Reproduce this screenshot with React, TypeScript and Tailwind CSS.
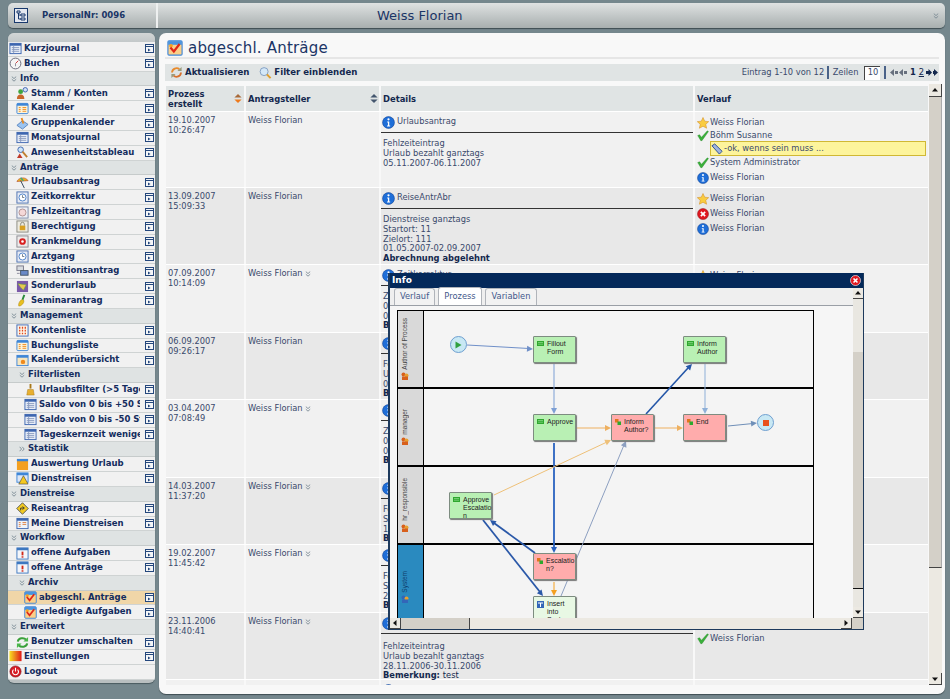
import type { ReactNode } from "react"

type IconName =
  | "table" | "dial" | "user" | "cal" | "group" | "finder" | "umbrella" | "clock" | "sick" | "lock" | "red"
  | "invest" | "special" | "bottle" | "grid" | "sun" | "broom" | "bar" | "warn" | "road" | "tasks" | "todo"
  | "done" | "swap" | "heat" | "power"

function Ico({ name, size = 13 }: { name: IconName; size?: number }) {
  const shapes: Record<IconName, ReactNode> = {
    table: <><rect x="1" y="1.5" width="12" height="11" fill="#e8eef8" stroke="#3d66b0" /><rect x="1" y="1.5" width="12" height="2.5" fill="#3d66b0" /><path d="M3 6h8M3 8h8M3 10h8M5 4v8" stroke="#8a9cc0" /></>,
    dial: <><circle cx="7" cy="7" r="5.8" fill="#f4f4f4" stroke="#667" /><path d="M7 7l3-3" stroke="#c33" /><path d="M7 7v3" stroke="#889" /></>,
    user: <><circle cx="5" cy="5" r="2.6" fill="#3fa63f" /><path d="M1 13c0-4 2-5 4-5s4 1 4 5z" fill="#c8662a" /><circle cx="10" cy="3" r="2.4" fill="#cfe0f8" stroke="#3d66b0" /></>,
    cal: <><rect x="1" y="1.5" width="12" height="11" rx="1" fill="#fdf3d8" stroke="#3d86d8" /><rect x="1" y="1.5" width="12" height="2.5" fill="#3d86d8" /><path d="M3 6h2M7 6h4M3 8h2M7 8h4M3 10h2M7 10h4" stroke="#f08a1c" /></>,
    group: <><path d="M1 9l6-5 6 4-6 5z" fill="#9cc4f0" stroke="#5a86c0" /><path d="M6 1l2 6" stroke="#e88a20" strokeWidth="2" /></>,
    finder: <><circle cx="5" cy="4" r="3" fill="#cfe6f8" stroke="#3d66b0" /><path d="M7 6l5 6" stroke="#c08030" strokeWidth="2" /><path d="M1 13l3-5 3 5z" fill="#c03a2a" /></>,
    umbrella: <><path d="M1 6c1-4 9-6 12-1z" fill="#e8b020" stroke="#b04020" strokeWidth=".6" /><path d="M5 5l4 8" stroke="#345" /><path d="M5 2l3 3" stroke="#3a8" strokeWidth="1.5" /></>,
    clock: <><rect x="1" y="1" width="12" height="12" fill="#e6eaf4" stroke="#4a70b0" /><circle cx="7" cy="7" r="3.8" fill="#fff" stroke="#4a80c8" /><path d="M7 7V4.5M7 7h2" stroke="#345" strokeWidth=".7" /></>,
    sick: <><rect x="1" y="1" width="12" height="12" fill="#eef0f6" stroke="#7a8aa8" /><circle cx="7" cy="7" r="3.8" fill="#f4d8d8" stroke="#b09090" /></>,
    lock: <><rect x="1" y="1" width="12" height="12" fill="#eceae0" stroke="#8a8a80" /><rect x="4" y="6" width="6" height="5" fill="#d8a020" /><path d="M5 6V4.5a2 2 0 014 0V6" fill="none" stroke="#887" /></>,
    red: <><rect x="1" y="1" width="12" height="12" fill="#eceaea" stroke="#8a8a90" /><circle cx="7" cy="7" r="3.6" fill="#d82020" /><circle cx="7" cy="7" r="1.4" fill="#fff" /></>,
    invest: <><rect x="1" y="1" width="7" height="5" fill="#d8dce0" stroke="#778" /><rect x="5" y="6" width="8" height="5" fill="#6a8ac8" stroke="#456" /><path d="M1 9h3" stroke="#889" /></>,
    special: <><rect x="1" y="1" width="12" height="12" fill="#7a5aa8" /><path d="M2 4l9 1-3 6-3-3z" fill="#e8c850" stroke="#5a3" strokeWidth=".5" /></>,
    bottle: <><path d="M3 13c-1-3 2-7 4-7s2 3 0 5-3 2-4 2z" fill="#e8c020" stroke="#a88010" strokeWidth=".5" /><path d="M7 6l2-5" stroke="#2a8a3a" strokeWidth="2" /></>,
    grid: <><rect x="1" y="1" width="12" height="12" fill="#fdf6ea" stroke="#3d6ab8" /><path d="M4 3v8M7 3v8M10 3v8" stroke="#e0481c" strokeWidth="1.4" strokeDasharray="2 1.2" /></>,
    sun: <><rect x="1" y="1.5" width="12" height="11" fill="#f6e6c0" stroke="#3d86d8" /><rect x="1" y="1.5" width="12" height="2.5" fill="#3d86d8" /><circle cx="7.5" cy="8.5" r="2.4" fill="#f08a1c" /></>,
    broom: <><path d="M7 1v5" stroke="#a87818" strokeWidth="2" /><path d="M3 13l1-6h6l1 6z" fill="#e8b030" stroke="#a87818" strokeWidth=".5" /></>,
    bar: <><rect x="1" y="1" width="12" height="12" fill="#f4a020" /><rect x="1" y="1" width="12" height="2.5" fill="#3d86d8" /></>,
    warn: <><rect x="1" y="1" width="12" height="10" fill="#dbe6f6" stroke="#3d86d8" /><rect x="1" y="1" width="12" height="2.5" fill="#3d86d8" /><path d="M8 4l5 9H3z" fill="#f4c820" stroke="#333" strokeWidth=".6" /></>,
    road: <><path d="M7 .8L13.2 7 7 13.2.8 7z" fill="#f2ca20" stroke="#555" /><path d="M5 9V6.5h3M7 5l2 1.5L7 8" fill="none" stroke="#333" /></>,
    tasks: <><rect x="1" y="1.5" width="12" height="11" fill="#f0f4fa" stroke="#3d66b0" /><rect x="1" y="1.5" width="12" height="2.5" fill="#3d66b0" /><path d="M3 6h2M3 8h2M3 10h2M7 6h4M7 8h4" stroke="#e08040" /></>,
    todo: <><rect x="1" y="1" width="12" height="12" fill="#f4f6fa" stroke="#3d78c0" /><rect x="1" y="1" width="12" height="2.5" fill="#3d78c0" /><rect x="6" y="5" width="2" height="4" fill="#d02818" /><rect x="6" y="10" width="2" height="1.5" fill="#d02818" /></>,
    done: <><rect x=".8" y=".8" width="12.4" height="12.4" rx="1" fill="#fbcf88" stroke="#3d86d8" /><rect x="1" y="1" width="12" height="3.2" fill="#4a94e0" /><circle cx="3.500" cy="5" r="1.600" fill="#f6a020" /><path d="M3 6.500l3 3.500 5-6.500" fill="none" stroke="#e02818" strokeWidth="1.900" /></>,
    swap: <><path d="M2 6a5 4 0 019-2" fill="none" stroke="#3aa03a" strokeWidth="2.2" /><path d="M12 8a5 4 0 01-9 2" fill="none" stroke="#3aa03a" strokeWidth="2.2" /><path d="M13 1v5H8zM1 13V8h5z" fill="#4ab84a" /></>,
    heat: <><defs><linearGradient id="heat"><stop offset="0" stopColor="#f8e020" /><stop offset="1" stopColor="#e01818" /></linearGradient></defs><rect x=".5" y="1" width="13" height="11" fill="url(#heat)" /></>,
    power: <><circle cx="7" cy="7" r="6" fill="#d81c24" stroke="#801018" strokeWidth=".7" /><path d="M4.8 5a3.2 3.2 0 104.4 0" fill="none" stroke="#fff" strokeWidth="1.2" /><path d="M7 3v4" stroke="#fff" strokeWidth="1.2" /></>,
  }
  return <svg width={size} height={size} viewBox="0 0 14 14" className="shrink-0">{shapes[name]}</svg>
}

function WindowIcon() {
  return (
    <svg width="9" height="9" viewBox="0 0 9 9" className="shrink-0">
      <rect x=".5" y=".5" width="8" height="8" fill="#f4f6f8" stroke="#24477c" />
      <path d="M1 2.5h7" stroke="#24477c" />
      <path d="M3 4.5l2.5 1.5L3 7.5z" fill="#24477c" />
    </svg>
  )
}

function Chevrons({ right = false }: { right?: boolean }) {
  return (
    <svg width="6" height="6" viewBox="0 0 6 6" className={right ? "-rotate-90 shrink-0" : "shrink-0"}>
      <path d="M.8.6L3 2.6 5.2.6M.8 3.2L3 5.2 5.2 3.2" fill="none" stroke="#7b8a94" strokeWidth=".9" />
    </svg>
  )
}

type MenuRow = { label: string; level: number; icon?: IconName; active?: boolean; noWin?: boolean; right?: boolean }

const menu: MenuRow[] = [
  { label: "Kurzjournal", level: 0, icon: "table" },
  { label: "Buchen", level: 0, icon: "dial" },
  { label: "Info", level: 0 },
  { label: "Stamm / Konten", level: 1, icon: "user" },
  { label: "Kalender", level: 1, icon: "cal" },
  { label: "Gruppenkalender", level: 1, icon: "group" },
  { label: "Monatsjournal", level: 1, icon: "table" },
  { label: "Anwesenheitstableau", level: 1, icon: "finder" },
  { label: "Anträge", level: 0 },
  { label: "Urlaubsantrag", level: 1, icon: "umbrella" },
  { label: "Zeitkorrektur", level: 1, icon: "clock" },
  { label: "Fehlzeitantrag", level: 1, icon: "sick" },
  { label: "Berechtigung", level: 1, icon: "lock" },
  { label: "Krankmeldung", level: 1, icon: "red" },
  { label: "Arztgang", level: 1, icon: "clock" },
  { label: "Investitionsantrag", level: 1, icon: "invest" },
  { label: "Sonderurlaub", level: 1, icon: "special" },
  { label: "Seminarantrag", level: 1, icon: "bottle" },
  { label: "Management", level: 0 },
  { label: "Kontenliste", level: 1, icon: "grid" },
  { label: "Buchungsliste", level: 1, icon: "cal" },
  { label: "Kalenderübersicht", level: 1, icon: "sun" },
  { label: "Filterlisten", level: 1 },
  { label: "Urlaubsfilter (>5 Tage)", level: 2, icon: "broom" },
  { label: "Saldo von 0 bis +50 Std", level: 2, icon: "table" },
  { label: "Saldo von 0 bis -50 Std", level: 2, icon: "table" },
  { label: "Tageskernzeit weniger", level: 2, icon: "table" },
  { label: "Statistik", level: 1, right: true },
  { label: "Auswertung Urlaub", level: 1, icon: "bar" },
  { label: "Dienstreisen", level: 1, icon: "warn" },
  { label: "Dienstreise", level: 0 },
  { label: "Reiseantrag", level: 1, icon: "road" },
  { label: "Meine Dienstreisen", level: 1, icon: "tasks" },
  { label: "Workflow", level: 0 },
  { label: "offene Aufgaben", level: 1, icon: "todo" },
  { label: "offene Anträge", level: 1, icon: "todo" },
  { label: "Archiv", level: 1 },
  { label: "abgeschl. Anträge", level: 2, icon: "done", active: true },
  { label: "erledigte Aufgaben", level: 2, icon: "done" },
  { label: "Erweitert", level: 0 },
  { label: "Benutzer umschalten", level: 1, icon: "swap" },
  { label: "Einstellungen", level: 0, icon: "heat" },
  { label: "Logout", level: 0, icon: "power", noWin: true },
]

function SideRow({ row }: { row: MenuRow }) {
  if (!row.icon) {
    return (
      <div className={`flex h-[14.83px] items-center gap-[3px] border-b border-[#c6cbcb] bg-[#dfe3e3] ${row.level === 1 ? "pl-[11px]" : "pl-[3px]"}`}>
        <Chevrons right={row.right} />
        <span className="text-[8.5px] font-bold text-[#142c5e]">{row.label}</span>
      </div>
    )
  }
  const pad = row.level === 0 ? "pl-[1px]" : row.level === 1 ? "pl-[8px]" : "pl-[16px]"
  return (
    <div className={`flex h-[14.83px] items-center border-b border-[#cfd3d3] pr-[1px] ${pad} ${row.active ? "bg-[#f0d6a8]" : "bg-[#f1f1f1]"}`}>
      <Ico name={row.icon} />
      <span className="ml-[2px] min-w-0 flex-1 overflow-hidden whitespace-nowrap text-[8.5px] font-bold text-[#142c5e]">{row.label}</span>
      {!row.noWin && <span className="ml-[5px]"><WindowIcon /></span>}
    </div>
  )
}

function Sidebar() {
  return (
    <aside className="flex h-[650px] w-[147px] shrink-0 flex-col overflow-hidden rounded-[6px] bg-[#b9bfc0] shadow-[0_1px_1px_#4b5b60]">
      <div className="h-[9px] shrink-0 bg-gradient-to-b from-[#d2d6d6] to-[#c3c8c9]" />
      {menu.map((row) => <SideRow key={row.label} row={row} />)}
    </aside>
  )
}

function InfoIcon({ size = 13 }: { size?: number }) {
  return (
    <svg width={size} height={size} viewBox="0 0 14 14" className="shrink-0">
      <circle cx="7" cy="7" r="6.4" fill="#1e6ed8" stroke="#0f3f90" strokeWidth=".6" />
      <circle cx="7" cy="3.6" r="1.2" fill="#fff" />
      <path d="M5.6 6h2.2v4.2h1v1H5.4v-1h1V7h-.8z" fill="#fff" />
    </svg>
  )
}

function HistIcon({ type }: { type: string }) {
  if (type === "info") return <InfoIcon size={12} />
  if (type === "star") {
    return (
      <svg width="12" height="12" viewBox="0 0 14 14" className="shrink-0">
        <path d="M7 .6l2 4.3 4.6.5-3.4 3.1 1 4.6L7 10.8l-4.2 2.3 1-4.6L.4 5.4 5 4.9z" fill="#f9cc40" stroke="#d8942a" strokeWidth=".7" />
      </svg>
    )
  }
  if (type === "check") {
    return (
      <svg width="12" height="12" viewBox="0 0 14 14" className="shrink-0">
        <path d="M.8 6.500l2.200-1 2.200 3L12 1l1.400.8-7.600 10.600H4.400z" fill="#3ab03a" stroke="#28802a" strokeWidth=".4" />
      </svg>
    )
  }
  return (
    <svg width="12" height="12" viewBox="0 0 14 14" className="shrink-0">
      <circle cx="7" cy="7" r="6.4" fill="#e01820" stroke="#901015" strokeWidth=".6" />
      <path d="M4.5 4.5l5 5M9.5 4.5l-5 5" stroke="#fff" strokeWidth="2" />
    </svg>
  )
}

type Hist = { type: string; name: string; note?: string }
type Row = { height: string; date: string; time: string; arrow?: boolean; title: string; lines: string[]; strong?: ReactNode; hist: Hist[]; textPad?: string }

const rows: Row[] = [
  {
    height: "h-[76px]", date: "19.10.2007", time: "10:26:47", title: "Urlaubsantrag",
    lines: ["Fehlzeiteintrag", "Urlaub bezahlt ganztags", "05.11.2007-06.11.2007"],
    hist: [
      { type: "star", name: "Weiss Florian" },
      { type: "check", name: "Böhm Susanne", note: "-ok, wenns sein muss ..." },
      { type: "check", name: "System Administrator" },
      { type: "info", name: "Weiss Florian" },
    ],
  },
  {
    height: "h-[77px]", date: "13.09.2007", time: "15:09:33", title: "ReiseAntrAbr",
    lines: ["Dienstreise ganztags", "Startort: 11", "Zielort: 111", "01.05.2007-02.09.2007"], strong: "Abrechnung abgelehnt",
    hist: [{ type: "star", name: "Weiss Florian" }, { type: "cross", name: "Weiss Florian" }, { type: "info", name: "Weiss Florian" }],
  },
  { height: "h-[68px]", date: "07.09.2007", time: "10:14:09", arrow: true, title: "Zeitkorrektur", lines: ["Zeitkorrektur", "07.09.2007", "08:00"], strong: "Bemerkung", hist: [{ type: "star", name: "Weiss Florian" }] },
  { height: "h-[67px]", date: "06.09.2007", time: "09:26:17", title: "Urlaubsantrag", lines: ["Fehlzeiteintrag", "Urlaub bezahlt ganztags", "01.10.2007"], strong: "Bemerkung", hist: [{ type: "star", name: "Weiss Florian" }] },
  { height: "h-[78px]", date: "03.04.2007", time: "07:08:49", arrow: true, title: "Zeitkorrektur", lines: ["Zeitkorrektur", "03.04.2007", "07:00"], strong: "Bemerkung", hist: [{ type: "star", name: "Weiss Florian" }] },
  { height: "h-[67px]", date: "14.03.2007", time: "11:37:20", arrow: true, title: "Urlaubsantrag", lines: ["Fehlzeiteintrag", "Sonderurlaub ganztags", "14.03.2007"], strong: "Bemerkung", hist: [{ type: "star", name: "Weiss Florian" }] },
  { height: "h-[68px]", date: "19.02.2007", time: "11:45:42", arrow: true, title: "Urlaubsantrag", lines: ["Fehlzeiteintrag", "Sonderurlaub ganztags", "20.02.2007"], strong: "Bemerkung", hist: [{ type: "star", name: "Weiss Florian" }] },
  {
    height: "h-[67px]", date: "23.11.2006", time: "14:40:41", arrow: true, title: "Urlaubsantrag", textPad: "pt-[8px]",
    lines: ["Fehlzeiteintrag", "Urlaub bezahlt ganztags", "28.11.2006-30.11.2006"],
    strong: <><b>Bemerkung:</b> <span className="font-normal">test</span></>,
    hist: [{ type: "star", name: "Weiss Florian" }, { type: "check", name: "Weiss Florian" }],
  },
  { height: "h-[20px]", date: "", time: "", title: "Urlaubsantrag", lines: [], hist: [] },
]

function SortIcon({ active = false }: { active?: boolean }) {
  return (
    <svg width="8" height="9" viewBox="0 0 8 9" className="shrink-0">
      <path d="M4 0l3.6 3.6H.4z" fill={active ? "#a86a3a" : "#44566e"} />
      <path d="M4 9L.4 5.4h7.2z" fill={active ? "#ee7a1c" : "#44566e"} />
    </svg>
  )
}

function DataRow({ row, dark }: { row: Row; dark: boolean }) {
  const bg = dark ? "bg-[#e8e8e8]" : "bg-[#f1f1f1]"
  return (
    <div className={`flex gap-[2px] border-b border-white ${row.height}`}>
      <div className={`w-[78px] shrink-0 pl-[2px] pt-[4px] ${bg}`}>
        <div>{row.date}</div>
        <div>{row.time}</div>
      </div>
      <div className={`flex w-[133px] shrink-0 items-start gap-[2px] pl-[2px] pt-[4px] ${bg}`}>
        <span>{row.date && "Weiss Florian"}</span>
        {row.arrow && <span className="mt-[2px]"><Chevrons /></span>}
      </div>
      <div className={`w-[312px] shrink-0 ${bg}`}>
        <div className="flex h-[21px] items-center gap-[2px] border-b border-[#333] pl-[1px]">
          <InfoIcon />
          <span>{row.title}</span>
        </div>
        <div className={`pl-[2px] ${row.textPad ?? "pt-[6px]"}`}>
          {row.lines.map((line) => <div key={line}>{line}</div>)}
          {row.strong && <div className="font-bold text-[#14284e]">{row.strong}</div>}
        </div>
      </div>
      <div className={`min-w-0 flex-1 pl-[2px] pt-[3px] ${bg}`}>
        {row.hist.map((h, i) => (
          <div key={i} className={h.note ? "-mt-[2px]" : row.hist[i - 1]?.note ? "-mt-px" : ""}>
            <div className="flex h-[15px] items-center gap-[1px]">
              <HistIcon type={h.type} />
              <span>{h.name}</span>
            </div>
            {h.note && (
              <div className="-mt-[2px] ml-[13px] mr-[2px] flex h-[15px] items-center border border-[#d0b834] bg-[#fdf49c]">
                <svg width="13" height="12" viewBox="0 0 14 13" className="shrink-0">
                  <path d="M1 3l3-2 8 8-3 3z" fill="#9fb4e0" stroke="#2a4a90" />
                </svg>
                <span>{h.note}</span>
              </div>
            )}
          </div>
        ))}
      </div>
    </div>
  )
}

function Triangle({ dir }: { dir: "up" | "down" | "left" | "right" }) {
  const d = { up: "M4 2l3 3.5H1z", down: "M4 6L1 2.5h6z", left: "M2 4l3.5-3v6z", right: "M6 4L2.5 1v6z" }[dir]
  return <svg width="8" height="8" viewBox="0 0 8 8"><path d={d} fill="#111" /></svg>
}

function ScrollBtn({ dir, className }: { dir: "up" | "down" | "left" | "right"; className: string }) {
  return (
    <div className={`flex shrink-0 items-center justify-center border-b border-r border-b-[#444] border-r-[#444] bg-[#ece9e2] ${className}`}>
      <Triangle dir={dir} />
    </div>
  )
}

function Table() {
  return (
    <div className="flex h-[601px] pl-[7px]">
      <div className="w-[762px] shrink-0 overflow-hidden pt-[2px]">
        <div className="flex h-[26px] gap-[2px] border-b border-white text-[8.4px] font-bold leading-[10px] text-[#14284e]">
          <div className="flex w-[78px] shrink-0 items-center justify-between bg-[#e0e4e4] pl-[2px] pr-[2px]">
            <span>Prozess<br />erstellt</span>
            <SortIcon active />
          </div>
          <div className="flex w-[133px] shrink-0 items-center justify-between bg-[#e0e4e4] pl-[2px] pr-[1px]">
            <span>Antragsteller</span>
            <SortIcon />
          </div>
          <div className="flex w-[312px] shrink-0 items-center bg-[#e0e4e4] pl-[2px]">Details</div>
          <div className="flex min-w-0 flex-1 items-center bg-[#e0e4e4] pl-[2px]">Verlauf</div>
        </div>
        {rows.map((row, i) => <DataRow key={i} row={row} dark={i % 2 === 1} />)}
      </div>
      <div className="ml-px flex w-[13px] shrink-0 flex-col bg-[#ece9e2]">
        <ScrollBtn dir="up" className="h-[13px] w-[13px]" />
        <div className="h-[471px] shrink-0 border-b border-r border-b-[#444] border-r-[#aaa] bg-[#d4d0c8]" />
        <div className="flex-1" />
        <ScrollBtn dir="down" className="h-[12px] w-[13px]" />
      </div>
    </div>
  )
}

function Toolbar() {
  return (
    <div className="mx-[6px] flex h-[17px] items-center bg-[#e0e4e4] pl-[5px] pr-[1px]">
      <svg width="13" height="13" viewBox="0 0 14 14" className="shrink-0">
        <path d="M2.2 7a4.8 4.8 0 018-3.4" fill="none" stroke="#e88a2c" strokeWidth="2" />
        <path d="M11.8 7a4.8 4.8 0 01-8 3.4" fill="none" stroke="#d8702c" strokeWidth="2" />
        <path d="M12.5 1v4.5H8zM1.5 13V8.5H6z" fill="#9a9a7a" />
      </svg>
      <span className="ml-[2px] text-[8.6px] font-bold text-[#14284e]">Aktualisieren</span>
      <svg width="13" height="14" viewBox="0 0 14 14" className="ml-[10px] shrink-0">
        <circle cx="5.5" cy="5.5" r="4.3" fill="#d4e8f8" stroke="#7f9cc0" />
        <path d="M8.5 8.5l4 4" stroke="#e0a030" strokeWidth="2.2" />
      </svg>
      <span className="ml-[2px] text-[8.6px] font-bold text-[#14284e]">Filter einblenden</span>
      <span className="ml-auto">Eintrag 1-10 von 12</span>
      <span className="mx-[3px] h-[13px] w-[1.5px] bg-[#4a6288]" />
      <span className="ml-[1px]">Zeilen</span>
      <span className="ml-[6px] flex h-[14px] w-[16px] items-center justify-center border-l border-t border-l-[#444] border-t-[#444] bg-white">10</span>
      <span className="mx-[4px] h-[13px] w-[1.5px] bg-[#4a6288]" />
      <svg width="18" height="7" viewBox="0 0 18 7" className="shrink-0"><path d="M4 0v7L0 3.5zM5 2h3v3H5zM13 0v7L9 3.5zM14 2h3v3h-3z" fill="#67707e" /></svg>
      <span className="ml-[2px] font-bold text-[#14284e]">1</span>
      <span className="ml-[3px] text-[#14284e] underline">2</span>
      <svg width="13" height="7" viewBox="0 0 13 7" className="ml-[1px] shrink-0"><path d="M1 2h2.5V0L7 3.5 3.500 7V5H1zM8 2h1v3H8zM9 0l4 3.500L9 7z" fill="#14284e" /></svg>
    </div>
  )
}

function Node({ pos, color, mark, children }: { pos: string; color: "green" | "red" | "pale"; mark: ReactNode; children: ReactNode }) {
  const bg = { green: "bg-[#b9f0b4]", red: "bg-[#ffacac]", pale: "bg-[#e8f8e4]" }[color]
  return (
    <div className={`absolute flex h-[27px] w-[43px] rounded-[1px] border border-[#7d8c80] pl-[3px] pt-[3px] font-['Liberation_Sans',sans-serif] text-[7px] leading-[8.2px] text-[#222] shadow-[1px_1px_1px_#777] ${pos} ${bg}`}>
      <span className="mr-[3px] mt-[1px] shrink-0">{mark}</span>
      <span>{children}</span>
    </div>
  )
}

const taskMark = <svg width="7" height="5" viewBox="0 0 7 5" className="block"><rect width="7" height="5" fill="#2ea82e" /><path d="M1 1.500h5M1 3.200h5" stroke="#b9f0b4" strokeWidth=".5" /></svg>
const routeMark = <svg width="6" height="6" viewBox="0 0 6 6" className="block"><rect width="3.500" height="3.500" fill="#e0761c" /><rect x="2.500" y="2.500" width="3.500" height="3.500" fill="#2ea82e" /></svg>
const systemMark = <svg width="7" height="7" viewBox="0 0 7 7" className="block"><rect width="7" height="7" fill="#3366b8" /><path d="M1 2h5M3.500 2v4" stroke="#fff" /></svg>

function Edge({ d, to, angle, color, width = 1 }: { d: string; to: [number, number]; angle: number; color: string; width?: number }) {
  const a = (angle * Math.PI) / 180
  const [x, y] = to
  const p = (l: number, off: number) => `${x - l * Math.cos(a) - off * Math.sin(a)},${y - l * Math.sin(a) + off * Math.cos(a)}`
  return (
    <g>
      <path d={d} fill="none" stroke={color} strokeWidth={width} />
      <polygon points={`${x},${y} ${p(6, 3)} ${p(6, -3)}`} fill={color} />
    </g>
  )
}

function Lane({ name, height, blue = false, icon = "#d8601c" }: { name: string; height: string; blue?: boolean; icon?: string }) {
  return (
    <div className={`flex shrink-0 border-b-2 border-black ${height}`}>
      <div className={`flex w-[26px] shrink-0 flex-col items-start justify-center border-r border-black pl-[3px] ${blue ? "bg-[#2a8abf] text-[#10406c]" : "bg-[#d9d9d9] text-[#444]"}`}>
        <span className="rotate-180 font-['Liberation_Sans',sans-serif] text-[6.5px] leading-[8px] [writing-mode:vertical-rl]">{name}</span>
        <svg width="8" height="8" viewBox="0 0 8 8" className="mt-[3px] shrink-0">
          <circle cx="2.500" cy="2.500" r="2" fill={icon} />
          <circle cx="5.500" cy="3.500" r="2" fill="#e8a030" />
          <rect x="1" y="4.500" width="6" height="3.500" fill={icon} />
        </svg>
      </div>
      <div className="flex-1 bg-[#f4f4f4]" />
    </div>
  )
}

function Diagram() {
  return (
    <div className="relative h-[312px] w-[463px] shrink-0 overflow-hidden bg-[#f6f6f6]">
      <div className="ml-[7px] mt-[4px] flex h-[324px] w-[417px] flex-col border-l border-r border-t border-black">
        <Lane name="Author of Process" height="h-[78px]" />
        <Lane name="manager" height="h-[78px]" />
        <Lane name="hr_responsible" height="h-[78px]" />
        <Lane name="System" height="h-[86px]" blue icon="#3366b8" />
      </div>
      <svg width="463" height="312" viewBox="390 306 463 312" className="absolute left-0 top-0">
        <Edge d="M467 345L529 348.500" to={[533, 349]} angle={3} color="#6f8fc8" />
        <Edge d="M554 364V410" to={[554, 414]} angle={90} color="#7d9fd4" />
        <Edge d="M577 428H607" to={[611, 428]} angle={0} color="#eeb060" />
        <Edge d="M655 428H679" to={[683, 428]} angle={0} color="#eeb060" />
        <Edge d="M646 414L688 368" to={[692, 364]} angle={-47} color="#2456a8" width={1.6} />
        <Edge d="M705 364V410" to={[705, 414]} angle={90} color="#8fb0d8" />
        <Edge d="M728 426L753 423.500" to={[757, 423]} angle={-6} color="#6f8fb8" />
        <Edge d="M554 443V549" to={[554, 553]} angle={90} color="#2a62c0" width={1.8} />
        <Edge d="M494 495L607 442" to={[611, 440]} angle={-25} color="#eec078" />
        <Edge d="M535 553L494 523" to={[490, 520]} angle={-143} color="#2a58a8" width={1.8} />
        <Edge d="M483 520L540 592" to={[543, 596]} angle={51} color="#2a58a8" width={1.8} />
        <Edge d="M554 582V592" to={[554, 596]} angle={90} color="#f4a020" />
        <Edge d="M561 596L624 445" to={[626, 441]} angle={-67} color="#8c9fc0" />
      </svg>
      <div className="absolute left-[60px] top-[30px] flex h-[17px] w-[17px] items-center justify-center rounded-full border border-[#6f9fd0] bg-[#c8e8f4]">
        <svg width="7" height="8" viewBox="0 0 7 8"><path d="M.5.500L6.500 4 .5 7.500z" fill="#30a040" /></svg>
      </div>
      <div className="absolute left-[367px] top-[108px] flex h-[17px] w-[17px] items-center justify-center rounded-full border border-[#6f9fd0] bg-[#c8e8f4]">
        <span className="h-[6px] w-[6px] bg-[#e8501c]" />
      </div>
      <Node pos="left-[143px] top-[30px]" color="green" mark={taskMark}>Fillout<br />Form</Node>
      <Node pos="left-[143px] top-[108px]" color="green" mark={taskMark}>Approve</Node>
      <Node pos="left-[221px] top-[108px]" color="red" mark={routeMark}>Inform<br />Author?</Node>
      <Node pos="left-[293px] top-[30px]" color="green" mark={taskMark}>Inform<br />Author</Node>
      <Node pos="left-[293px] top-[108px]" color="red" mark={routeMark}>End</Node>
      <Node pos="left-[59px] top-[186px]" color="green" mark={taskMark}>Approve<br />Escalatio<br />n</Node>
      <Node pos="left-[143px] top-[247px]" color="red" mark={routeMark}>Escalatio<br />n?</Node>
      <Node pos="left-[143px] top-[290px]" color="pale" mark={systemMark}>Insert into<br />System</Node>
    </div>
  )
}

function InfoModal() {
  return (
    <div className="absolute left-[388px] top-[273px] flex h-[357px] w-[476px] flex-col overflow-hidden border-b border-l-2 border-r border-[#1e3a5c] bg-[#efefef]">
      <div className="flex h-[15px] shrink-0 items-center justify-between bg-[#04295a] pl-[2px] pr-[2px]">
        <span className="text-[9px] font-bold text-white">Info</span>
        <svg width="11" height="11" viewBox="0 0 14 14" className="shrink-0">
          <circle cx="7" cy="7" r="6.4" fill="#e01820" stroke="#fff" strokeWidth=".8" />
          <path d="M4.500 4.500l5 5M9.500 4.500l-5 5" stroke="#fff" strokeWidth="2" />
        </svg>
      </div>
      <div className="flex h-[330px] shrink-0">
        <div className="w-[463px] shrink-0">
          <div className="flex h-[18px] items-end gap-[3px] border-b border-[#9a9fa6] pl-[4px] text-[#43588a]">
            <span className="flex h-[17px] w-[41px] items-center justify-center rounded-t-[3px] border border-b-0 border-[#b0b4ba] bg-[#f2f2f2]">Verlauf</span>
            <span className="flex h-[18px] w-[44px] items-center justify-center rounded-t-[3px] border border-b-0 border-[#b0b4ba] bg-white">Prozess</span>
            <span className="flex h-[17px] w-[52px] items-center justify-center rounded-t-[3px] border border-b-0 border-[#b0b4ba] bg-[#f2f2f2]">Variablen</span>
          </div>
          <Diagram />
        </div>
        <div className="flex h-[330px] w-[11px] shrink-0 flex-col bg-[#e9e7e1]">
          <ScrollBtn dir="up" className="h-[11px] w-[11px]" />
          <div className="mt-[53px] h-[237px] shrink-0 border-b border-b-[#111] bg-[#d4d0c8]" />
          <div className="flex-1" />
          <ScrollBtn dir="down" className="h-[11px] w-[11px]" />
        </div>
      </div>
      <div className="flex h-[11px] shrink-0 bg-[#ece9e2]">
        <ScrollBtn dir="left" className="h-[11px] w-[11px]" />
        <div className="h-[11px] w-[69px] shrink-0 border-r border-r-[#444] bg-[#d4d0c8]" />
        <div className="flex-1" />
        <ScrollBtn dir="right" className="h-[11px] w-[11px]" />
        <div className="h-[11px] w-[11px] shrink-0 bg-[#d4d0c8]" />
      </div>
    </div>
  )
}

export default function App() {
  return (
    <div className="relative h-[699px] w-[950px] overflow-hidden bg-[#75878d] pl-[8px] pr-[5px] pt-[3px] font-['DejaVu_Sans',sans-serif] text-[8.3px] leading-[9.8px] text-[#3a4a6c]">
      <header className="flex h-[25px] items-center rounded-[5px] bg-gradient-to-b from-[#dfe2e2] to-[#a8afaf] shadow-[0_1px_1px_#3f4d52]">
        <div className="flex h-full w-[150px] shrink-0 items-center border-r-2 border-r-[#eef0f0] pl-[6px]">
          <svg width="14" height="15" viewBox="0 0 14 15" className="shrink-0">
            <rect x=".5" y=".5" width="13" height="14" fill="#e4e8f0" stroke="#18386c" />
            <path d="M3 3h3v2H3zM7 6h4v2H7zM7 10h4v2H7zM4.500 5v6H7M4.500 7H7" fill="none" stroke="#18386c" />
          </svg>
          <span className="ml-[14px] text-[8.5px] font-bold text-[#1b3566]">PersonalNr: 0096</span>
        </div>
        <span className="ml-[219px] text-[13px] leading-[16px] text-[#1b3566]">Weiss Florian</span>
        <span className="ml-auto mr-[6px]"><Chevrons /></span>
      </header>
      <div className="mt-[5px] flex gap-[4px]">
        <Sidebar />
        <main className="h-[661px] w-[786px] shrink-0 overflow-hidden rounded-[7px] bg-[#f8f8f8] shadow-[0_1px_1px_#3f4d52]">
          <div className="mx-[6px] flex h-[26px] items-center gap-[5px] border-b-2 border-[#e6e6e6] pl-[2px] pt-[5px]">
            <Ico name="done" size={16} />
            <h1 className="text-[15px] leading-[20px] tracking-[0.2px] text-[#1b3566]">abgeschl. Anträge</h1>
          </div>
          <div className="mt-[5px]"><Toolbar /></div>
          <div className="mt-[3px]"><Table /></div>
        </main>
      </div>
      <InfoModal />
    </div>
  )
}
